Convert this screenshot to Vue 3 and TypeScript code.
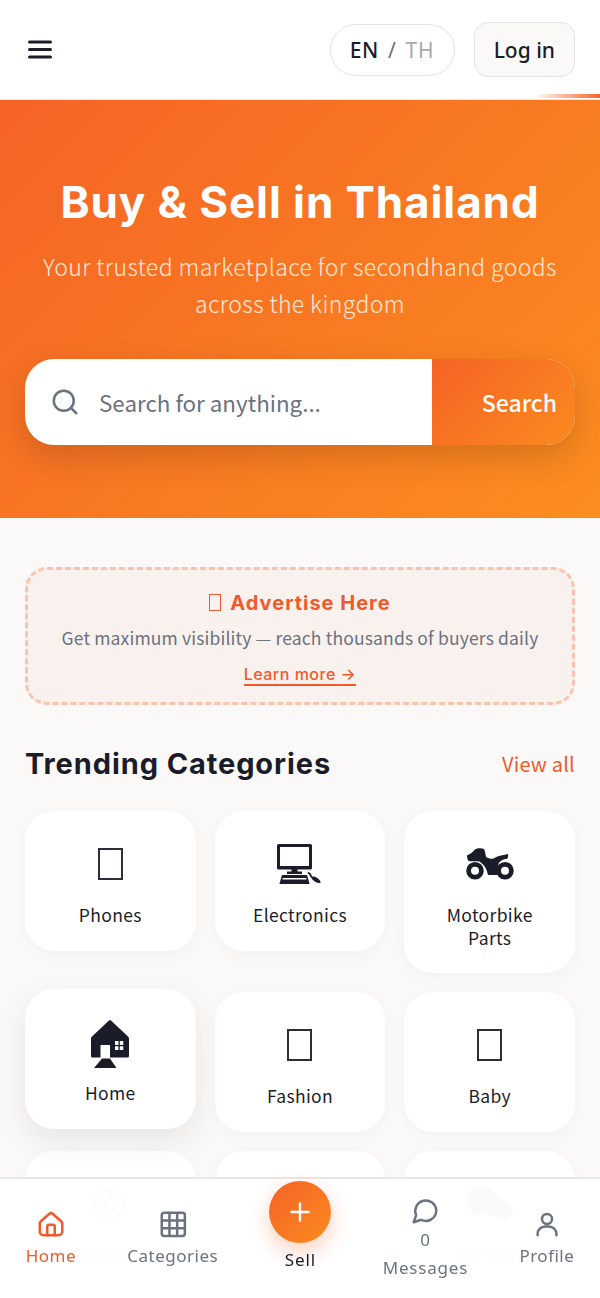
<script setup lang="ts">
interface Category {
  name: string
  icon: 'tofu' | 'computer' | 'motorbike' | 'house' | 'ball' | 'car'
  hover?: boolean
}

const categories: Category[] = [
  { name: 'Phones', icon: 'tofu' },
  { name: 'Electronics', icon: 'computer' },
  { name: 'Motorbike Parts', icon: 'motorbike' },
  { name: 'Home', icon: 'house', hover: true },
  { name: 'Fashion', icon: 'tofu' },
  { name: 'Baby', icon: 'tofu' },
  { name: 'Sports', icon: 'ball' },
  { name: 'Books', icon: 'tofu' },
  { name: 'Vehicles', icon: 'car' },
]
</script>

<template>
  <div class="page">
    <header class="topbar">
      <button class="menu" aria-label="Menu">
        <svg width="24" height="20" viewBox="0 0 24 20" fill="none" stroke="#1a1d29" stroke-width="3" stroke-linecap="round">
          <path d="M1.5 2h21M1.5 9.5h21M1.5 17h21" />
        </svg>
      </button>
      <div class="top-actions">
        <div class="lang"><b>EN</b><i>/</i><span>TH</span></div>
        <button class="login">Log in</button>
      </div>
      <div class="streak"></div>
    </header>

    <section class="hero">
      <h1>Buy &amp; Sell in Thailand</h1>
      <p>Your trusted marketplace for secondhand goods across the kingdom</p>
      <div class="search">
        <svg class="search-icon" width="30" height="30" viewBox="0 0 24 24" fill="none" stroke="#6b7280" stroke-width="2" stroke-linecap="round">
          <circle cx="11" cy="11" r="8" />
          <path d="M21 21l-4.3-4.3" />
        </svg>
        <span class="placeholder">Search for anything...</span>
        <button class="search-btn">Search</button>
      </div>
    </section>

    <main class="content">
      <div class="ad">
        <h3><span class="ad-tofu"></span>Advertise Here</h3>
        <p>Get maximum visibility — reach thousands of buyers daily</p>
        <a>Learn more →</a>
      </div>

      <div class="section-head">
        <h2>Trending Categories</h2>
        <a>View all</a>
      </div>

      <div class="grid">
        <div v-for="cat in categories" :key="cat.name" class="card" :class="{ hover: cat.hover }">
          <div class="card-icon">
            <span v-if="cat.icon === 'tofu'" class="tofu"></span>
            <svg v-else-if="cat.icon === 'computer'" width="46" height="40" viewBox="0 0 46 40" fill="#1a1d29">
              <path fill-rule="evenodd" d="M1.5 0h32A1.5 1.5 0 0 1 35 1.5V24a1.500 1.500 0 0 1-1.500 1.500h-32A1.500 1.500 0 0 1 0 24V1.500A1.500 1.500 0 0 1 1.500 0zM3 3v19h29V3z" />
              <path d="M14.500 25h6v2.500H25V30H10v-2.500h4.500z" />
              <path fill-rule="evenodd" d="M5 31h25l2.500 8.500a.5.5 0 0 1-.5.5H3a.5.500 0 0 1-.5-.5zm.8 3-.4 1.600h24.200l-.4-1.600z" />
              <path d="M31 28c1.800.3 3 1.300 3.500 3 .2.700.5 1.200 1 1.700 2.500-.6 6.500 2 8 5 .4 1-.4 1.500-1.500 1.300-3-.4-6.500-2.500-7.500-5-1-.8-1.600-1.800-2-2.800-.3-1-1-1.600-2-1.800z" />
            </svg>
            <svg v-else-if="cat.icon === 'motorbike'" width="48" height="32" viewBox="0 0 48 32" fill="#1a1d29">
              <path fill-rule="evenodd" d="M9 14a8.800 8.800 0 1 1 0 17.600A8.800 8.800 0 0 1 9 14zm0 4.800a4 4 0 1 0 0 8 4 4 0 0 0 0-8z" />
              <path fill-rule="evenodd" d="M39 14a8.800 8.800 0 1 1 0 17.600A8.800 8.800 0 0 1 39 14zm0 4.800a4 4 0 1 0 0 8 4 4 0 0 0 0-8z" />
              <path d="M1 7.500C4 6 7 4 9 1.500 11 .2 15-.3 18 1c1 2 1.500 5 2 8 2.500 1.500 5 2 7 1.700 2-1 4.500-2.500 7-3l8-1.700c.5 1.500 0 3.500-1 5-3.500 0-7 1.500-8.500 5-.6 2-.8 5-1.500 11h-9c-1-5-3-10-8.500-13.500-4.500-.6-9 .3-11.500-1C1.500 11 .8 9 1 7.500z" />
            </svg>
            <svg v-else-if="cat.icon === 'house'" class="house" width="38" height="48" viewBox="0 0 38 48" fill="#1a1d29">
              <path fill-rule="evenodd" d="M18 .5a1.400 1.400 0 0 1 2 0l17 16c.6.600 1 1.200 1 2V36a1.500 1.500 0 0 1-1.500 1.500h-35A1.500 1.500 0 0 1 0 36V18.500c0-.8.400-1.400 1-2zM9.500 25v12.500H19V25zM24 21v3.900h3.500V21zm4.800 0v3.900h3.500V21zM24 26.200v3.900h3.500v-3.900zm4.800 0v3.900h3.500v-3.900z" />
              <path d="M11 38.500h8L25.500 48H3z" />
            </svg>
            <svg v-else-if="cat.icon === 'ball'" width="32" height="32" viewBox="0 0 32 32" fill="none" stroke="#1a1d29" stroke-width="2">
              <circle cx="16" cy="16" r="15" />
              <path d="M16 10l6 4.300-2.300 7h-7.400l-2.300-7zM16 10V2M22 14.300l7.500-2.500M19.700 21.300l4.500 6.400M12.300 21.300l-4.500 6.400M10 14.300l-7.500-2.500" />
            </svg>
            <svg v-else width="46" height="38" viewBox="0 0 46 38" fill="#1a1d29">
              <path d="M12 0c8 0 14 5 20 12 6 1 13 5 14 14 0 6-4 10-9 10-4 0-8-4-12-6H12C6 30 0 26 0 17 0 8 5 0 12 0z" />
            </svg>
          </div>
          <div class="card-name">{{ cat.name }}</div>
        </div>
      </div>
    </main>

    <nav class="bottom-nav">
      <div class="nav-item active">
        <svg width="30" height="30" viewBox="0 0 24 24" fill="none" stroke="currentColor" stroke-width="2" stroke-linecap="round" stroke-linejoin="round">
          <path d="M3 11.500a2 2 0 0 1 .7-1.500l7-6.200a2 2 0 0 1 2.600 0l7 6.200a2 2 0 0 1 .7 1.500V18a3 3 0 0 1-3 3H6a3 3 0 0 1-3-3z" />
          <path d="M9 21v-7a1.500 1.500 0 0 1 1.500-1.500h3A1.500 1.500 0 0 1 15 14v7" />
        </svg>
        <span>Home</span>
      </div>
      <div class="nav-item">
        <svg width="30" height="30" viewBox="0 0 24 24" fill="none" stroke="currentColor" stroke-width="2" stroke-linejoin="round">
          <rect x="3" y="3" width="18.500" height="18.500" rx="2" />
          <path d="M3 9.170h18.500M3 15.330h18.500M9.170 3v18.500M15.330 3v18.500" />
        </svg>
        <span>Categories</span>
      </div>
      <div class="nav-item sell">
        <div class="plus">
          <svg width="26" height="26" viewBox="0 0 24 24" fill="none" stroke="#fff" stroke-width="2.200" stroke-linecap="round">
            <path d="M12 4v16M4 12h16" />
          </svg>
        </div>
        <span>Sell</span>
      </div>
      <div class="nav-item messages">
        <svg width="30" height="30" viewBox="0 0 24 24" fill="none" stroke="currentColor" stroke-width="2" stroke-linecap="round" stroke-linejoin="round">
          <path d="M21 11.500a8.400 8.400 0 0 1-12.200 7.500L3 21l1.900-5.700A8.400 8.400 0 1 1 21 11.500z" />
        </svg>
        <em>0</em>
        <span>Messages</span>
      </div>
      <div class="nav-item">
        <svg width="30" height="30" viewBox="0 0 24 24" fill="none" stroke="currentColor" stroke-width="2" stroke-linecap="round" stroke-linejoin="round">
          <circle cx="12" cy="8" r="4" />
          <path d="M4.500 21v-1a6 6 0 0 1 6-6h3a6 6 0 0 1 6 6v1" />
        </svg>
        <span>Profile</span>
      </div>
    </nav>
  </div>
</template>

<style scoped>
.page {
  height: 100vh;
  overflow: hidden;
  background: #faf9f7;
  color: #1a1d29;
  font-family: "Noto Sans CJK JP", "Noto Sans", sans-serif;
}

.topbar {
  position: relative;
  display: flex;
  align-items: center;
  justify-content: space-between;
  height: 99px;
  padding: 0 25px 0 28px;
  background: #fff;
  border-bottom: 1px solid #ece9e5;
  box-sizing: content-box;
}
.menu {
  display: flex;
  padding: 0;
  border: 0;
  background: none;
}
.top-actions {
  display: flex;
  align-items: center;
  gap: 19px;
}
.lang {
  display: flex;
  align-items: center;
  height: 52px;
  padding: 0 19px 0 18.500px;
  box-sizing: border-box;
  border: 1.500px solid #e5e3e0;
  border-radius: 26px;
  font-family: "Noto Sans", sans-serif;
  font-size: 21px;
  letter-spacing: 0.6px;
}
.lang b { font-weight: 500; }
.lang i { margin: 0 9px; color: #6b7280; font-style: normal; }
.lang span { color: #a8a8a8; letter-spacing: 1px; }
.login {
  height: 55px;
  padding: 0 19px;
  border: 1.500px solid #e5e3e0;
  border-radius: 14px;
  background: #faf9f7;
  color: #1a1d29;
  font-family: "Noto Sans", sans-serif;
  font-size: 21px;
  font-weight: 500;
}
.streak {
  position: absolute;
  right: 0;
  bottom: 1px;
  width: 66px;
  height: 4px;
  background: linear-gradient(90deg, transparent, #f76426);
}

.hero {
  padding: 74px 25px 73px;
  background: linear-gradient(135deg, #f56326, #fb8d1f);
  text-align: center;
  color: #fff;
}
.hero h1 {
  margin: 0;
  font-family: Inter, sans-serif;
  font-size: 44px;
  font-weight: 700;
  letter-spacing: 0.9px;
  line-height: 56px;
}
.hero p {
  margin: 18px 0 37px;
  font-size: 23px;
  font-weight: 300;
  letter-spacing: 0.4px;
  line-height: 37px;
  color: #ffe9d8;
}
.search {
  display: flex;
  align-items: center;
  height: 86px;
  border-radius: 29px;
  background: #fff;
  box-shadow: 0 12px 32px rgba(0, 0, 0, 0.15);
  overflow: hidden;
}
.search-icon { margin-left: 25px; }
.placeholder {
  flex: 1;
  margin-left: 19px;
  color: #6b7280;
  font-size: 22.400px;
  text-align: left;
}
.search-btn {
  align-self: stretch;
  width: 143px;
  padding: 0 18px 0 0;
  border: 0;
  background: linear-gradient(135deg, #f56326, #fb8a1f);
  color: #fff;
  font-family: inherit;
  font-size: 23px;
  font-weight: 500;
  text-align: right;
}

.content { padding: 49px 25px 0; }
.ad {
  height: 138px;
  padding-top: 19px;
  box-sizing: border-box;
  border: 3px dashed #f9c4ae;
  border-radius: 22px;
  background: #f9f1ee;
  text-align: center;
}
.ad h3 {
  margin: 0;
  color: #f0592a;
  font-family: Inter, sans-serif;
  font-size: 20px;
  font-weight: 700;
  line-height: 28px;
  letter-spacing: 1px;
}
.ad-tofu {
  display: inline-block;
  width: 10px;
  height: 15px;
  margin-right: 9px;
  border: 1px solid #f0592a;
  vertical-align: -1px;
}
.ad p {
  margin: 8px 0 10px;
  color: #6b7280;
  font-size: 17.500px;
  letter-spacing: 0.15px;
  line-height: 26px;
}
.ad a {
  color: #f0592a;
  font-family: Inter, sans-serif;
  font-size: 16px;
  font-weight: 500;
  letter-spacing: 0.5px;
  border-bottom: 2px solid #f0592a;
}

.section-head {
  display: flex;
  align-items: center;
  justify-content: space-between;
  margin: 38px 0 28px;
  height: 40px;
}
.section-head h2 {
  margin: 0;
  font-family: Inter, sans-serif;
  font-size: 29px;
  font-weight: 700;
  letter-spacing: 0.9px;
}
.section-head a {
  color: #f0592a;
  font-size: 20px;
  letter-spacing: 0.2px;
}

.grid {
  display: grid;
  grid-template-columns: repeat(3, 1fr);
  gap: 19.200px;
  align-items: start;
}
.card {
  padding: 23px 24px 24px;
  box-sizing: border-box;
  border-radius: 29px;
  background: #fff;
  box-shadow: 0 4px 14px rgba(0, 0, 0, 0.03);
  text-align: center;
}
.card.hover {
  transform: translateY(-3px);
  box-shadow: 0 12px 32px rgba(0, 0, 0, 0.08);
}
.card-icon {
  display: flex;
  align-items: center;
  justify-content: center;
  height: 60px;
}
.tofu {
  width: 25px;
  height: 32px;
  box-sizing: border-box;
  border: 2px solid #2b2e39;
}
.house { margin-top: 4px; }
.card-name {
  padding-top: 10px;
  font-size: 17.500px;
  letter-spacing: 0.35px;
  line-height: 22.500px;
}

.bottom-nav {
  position: fixed;
  left: 0;
  right: 0;
  bottom: 0;
  display: flex;
  justify-content: space-around;
  height: 121px;
  box-sizing: border-box;
  border-top: 2px solid #e8e6e3;
  background: rgba(255, 255, 255, 0.98);
  backdrop-filter: blur(1px);
  color: #6b7280;
}
.nav-item {
  display: flex;
  flex-direction: column;
  align-items: center;
  padding-top: 30px;
  font-family: "Noto Sans", sans-serif;
  font-size: 17px;
  letter-spacing: 0.5px;
}
.nav-item svg { margin-bottom: 5px; }
.nav-item.active { color: #f0592a; }
.nav-item.sell {
  padding-top: 2px;
  color: #1a1d29;
  letter-spacing: 0.9px;
}
.nav-item.sell svg { margin-bottom: 0; }
.nav-item.messages { padding-top: 17px; }
.nav-item.messages svg { margin-bottom: 1px; }
.nav-item.messages span { margin-top: 3px; letter-spacing: 0.8px; }
.nav-item em { font-style: normal; line-height: 26px; }
.plus {
  display: flex;
  align-items: center;
  justify-content: center;
  width: 62px;
  height: 62px;
  margin-bottom: 5px;
  border-radius: 50%;
  background: linear-gradient(135deg, #f56326, #fb8a1f);
  box-shadow: 0 8px 20px rgba(247, 100, 38, 0.3);
}
</style>
